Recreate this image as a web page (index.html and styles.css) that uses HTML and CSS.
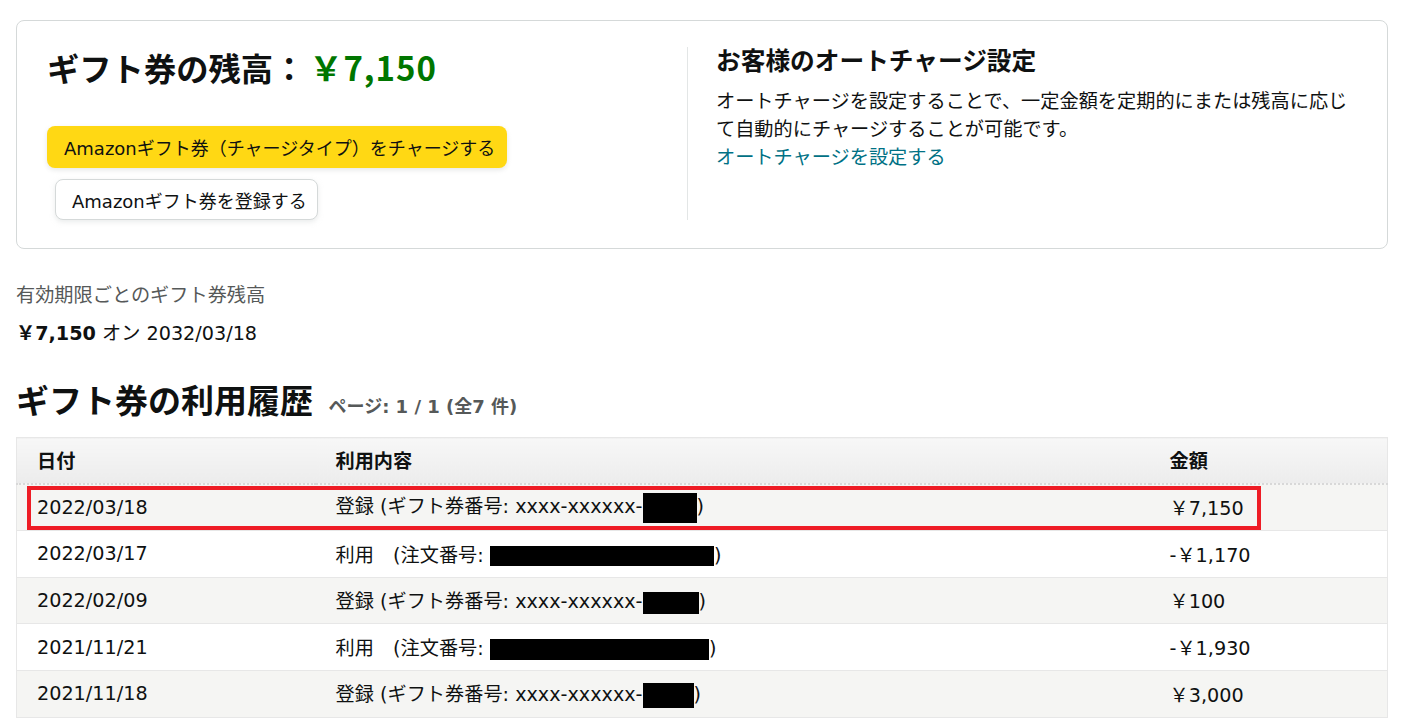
FILE: index.html
```html
<!DOCTYPE html>
<html lang="ja">
<head>
<meta charset="utf-8">
<title>ギフト券</title>
<link rel="stylesheet" href="styles.css">
</head>
<body>
<div class="card">
  <div class="card-left">
    <h1 class="balance-title">ギフト券の残高：<span class="balance-amount">￥7,150</span></h1>
    <div class="buttons">
      <a class="btn btn-primary">Amazonギフト券（チャージタイプ）をチャージする</a>
      <a class="btn btn-secondary">Amazonギフト券を登録する</a>
    </div>
  </div>
  <div class="card-right">
    <h2 class="auto-title">お客様のオートチャージ設定</h2>
    <p class="auto-text">オートチャージを設定することで、一定金額を定期的にまたは残高に応じて自動的にチャージすることが可能です。</p>
    <a class="link">オートチャージを設定する</a>
  </div>
</div>

<p class="expiry-label">有効期限ごとのギフト券残高</p>
<p class="expiry-row"><b>￥7,150</b> オン 2032/03/18</p>

<h2 class="history-title">ギフト券の利用履歴 <span class="page-info">ページ: 1 / 1 (全7 件)</span></h2>

<div class="table-wrap">
  <table class="history">
    <colgroup>
      <col class="col-date">
      <col class="col-desc">
      <col class="col-amount">
    </colgroup>
    <thead>
      <tr><th>日付</th><th>利用内容</th><th>金額</th></tr>
    </thead>
    <tbody>
      <tr class="alt"><td>2022/03/18</td><td>登録 (ギフト券番号: xxxx-xxxxxx-<span class="mask mask-1"></span>)</td><td>￥7,150</td></tr>
      <tr><td>2022/03/17</td><td>利用　(注文番号: <span class="mask mask-2"></span>)</td><td>-￥1,170</td></tr>
      <tr class="alt"><td>2022/02/09</td><td>登録 (ギフト券番号: xxxx-xxxxxx-<span class="mask mask-3"></span>)</td><td>￥100</td></tr>
      <tr><td>2021/11/21</td><td>利用　(注文番号: <span class="mask mask-4"></span>)</td><td>-￥1,930</td></tr>
      <tr class="alt"><td>2021/11/18</td><td>登録 (ギフト券番号: xxxx-xxxxxx-<span class="mask mask-5"></span>)</td><td>￥3,000</td></tr>
    </tbody>
  </table>
  <div class="highlight"></div>
</div>
</body>
</html>
```
FILE: styles.css
```css
* { box-sizing: border-box; }
html, body { background: #fff; }
body {
  margin: 0;
  padding: 20px 29px 0 16px;
  font-family: "DejaVu Sans", "Noto Sans CJK JP", sans-serif;
  font-size: 19.2px;
  color: #0f1111;
  overflow: hidden;
}

.card {
  display: grid;
  grid-template-columns: 640px 1fr;
  border: 1px solid #d5d9d9;
  border-radius: 8px;
  padding: 26px 30px 28px 30px;
}
.card-left { display: flex; flex-direction: column; }
.balance-title {
  margin: 0;
  font-size: 32.3px;
  line-height: 40px;
  font-weight: bold;
  font-family: "Noto Sans CJK JP", sans-serif;
}
.balance-amount {
  color: #007600;
  font-size: 33px;
  margin-left: 4px;
  letter-spacing: 1px;
  font-family: "Noto Sans CJK JP", sans-serif;
}
.buttons {
  display: flex;
  flex-direction: column;
  align-items: flex-start;
  margin-top: 39px;
  gap: 11px;
}
.btn {
  display: inline-flex;
  align-items: center;
  font-size: 18px;
  color: #0f1111;
  border-radius: 8px;
  white-space: nowrap;
}
.btn-primary {
  height: 42px;
  padding: 0 12px 0 17px;
  background: #ffd814;
  box-shadow: 0 2px 5px 0 rgba(213, 217, 217, 0.6);
}
.btn-secondary {
  height: 41px;
  margin-left: 8px;
  padding: 0 10px 0 16px;
  background: #fff;
  border: 1px solid #d5d9d9;
  box-shadow: 0 2px 5px 0 rgba(213, 217, 217, 0.5);
}

.card-right {
  border-left: 1px solid #e3e6e6;
  padding-left: 28px;
}
.auto-title {
  margin: 0;
  font-size: 24.7px;
  line-height: 30px;
  font-weight: bold;
}
.auto-text {
  margin: 11px 0 0;
  line-height: 28px;
}
.link {
  display: block;
  color: #007185;
  line-height: 28px;
}

.expiry-label {
  margin: 33px 0 0;
  color: #565959;
  line-height: 27px;
}
.expiry-row {
  margin: 11px 0 0;
  line-height: 27px;
}
.expiry-row b { font-weight: bold; }

.history-title {
  margin: 35px 0 0;
  font-size: 33px;
  line-height: 40px;
  font-weight: bold;
}
.page-info {
  margin-left: 4px;
  font-size: 18px;
  line-height: 40px;
  color: #565959;
  font-weight: bold;
}

.table-wrap {
  position: relative;
  margin-top: 10px;
}
.history {
  width: 100%;
  border-collapse: collapse;
  table-layout: fixed;
  border: 1px solid #e7e7e7;
}
.col-date { width: 299px; }
.col-desc { width: 834px; }
.history th {
  height: 46px;
  padding: 0 20px;
  text-align: left;
  font-weight: bold;
  background: linear-gradient(#f7f7f7, #ececec);
  border-bottom: 2px dotted #d8d8d8;
}
.history td {
  height: 46.75px;
  padding: 0 20px;
  border-bottom: 1px solid #e7e7e7;
  white-space: nowrap;
}
.history tr.alt td { background: #f5f5f3; }

.mask {
  display: inline-block;
  background: #000;
  vertical-align: middle;
}
.mask-1 { width: 54px; height: 30px; }
.mask-2 { width: 224px; height: 20px; }
.mask-3 { width: 56px; height: 22px; }
.mask-4 { width: 219px; height: 21px; }
.mask-5 { width: 51px; height: 25px; }

.highlight {
  position: absolute;
  left: 11px;
  top: 49px;
  width: 1234px;
  height: 44px;
  border: 4px solid #ee1c25;
}
```
